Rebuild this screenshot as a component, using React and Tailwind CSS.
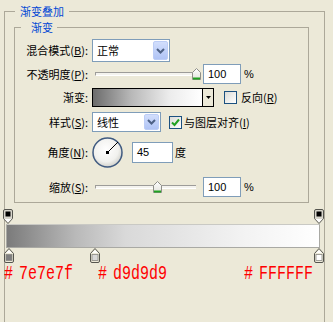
import React from 'react';

const cjk = "font-['Noto_Sans_CJK_SC','Liberation_Sans',sans-serif]";

const DropButton = () => (
  <div className="w-[15px] h-full rounded-[2px] border border-[#bccdf6] bg-gradient-to-b from-[#d2defc] to-[#b0c4f5] flex items-center justify-center">
    <svg width="9" height="6" viewBox="0 0 9 6">
      <path d="M1 1l3.5 3.5L8 1" fill="none" stroke="#4d6185" strokeWidth="2" />
    </svg>
  </div>
);

const Checkbox = ({ checked }) => (
  <div className="w-[13px] h-[13px] border border-[#1c5180] bg-gradient-to-br from-[#dcdcd7] to-white flex items-center justify-center">
    {checked && (
      <svg width="9" height="9" viewBox="0 0 9 9">
        <path d="M1 4.5l2.5 2.5L8 1.5" fill="none" stroke="#21a121" strokeWidth="2" />
      </svg>
    )}
  </div>
);

const Thumb = ({ left }) => (
  <svg className="absolute top-1/2 -translate-y-1/2" style={{ left }} width="9" height="12" viewBox="0 0 9 12">
    <defs>
      <linearGradient id="tg" x1="0" y1="0" x2="0" y2="1">
        <stop offset="0" stopColor="#ffffff" />
        <stop offset="1" stopColor="#e3e3dc" />
      </linearGradient>
    </defs>
    <path d="M0.5 4.5L4.5 0.5L8.5 4.5V11.5H0.5Z" fill="url(#tg)" stroke="#8f8f88" />
    <rect x="1" y="9.5" width="7" height="2" fill="#21a121" />
  </svg>
);

// thumb offset in px from slider start
const Slider = ({ thumb }) => (
  <div className="relative w-[108px] h-full flex items-center">
    <div className="ml-[3px] mr-[4px] flex-1 h-[4px] border-t border-l border-[#9d9c99] border-b border-b-white bg-[#f4f3ee]" />
    <Thumb left={thumb} />
  </div>
);

const NumBox = ({ value, className }) => (
  <div className={`bg-white border border-[#7f9db9] flex items-center pl-[4px] text-[11px] font-['Liberation_Sans',sans-serif] ${className}`}>
    {value}
  </div>
);

const Label = ({ children }) => (
  <div className="w-[73px] text-right whitespace-nowrap">{children}</div>
);

const OpacityStop = () => (
  <svg width="10" height="15" viewBox="0 0 10 15">
    <path d="M2 0.5H8Q9.5 0.5 9.5 2V9.5L5 14.5L0.5 9.5V2Q0.5 0.5 2 0.5Z" fill="#d8d6cc" stroke="#55554f" />
    <rect x="2.5" y="2.5" width="5" height="5" fill="#000" />
    <path d="M1.5 10H8.5L5 13.5Z" fill="#fff" />
  </svg>
);

const ColorStop = ({ color, style }) => (
  <svg className="absolute top-0" style={style} width="10" height="15" viewBox="0 0 10 15">
    <path d="M5 0.5L9.5 5.5V13Q9.5 14.5 8 14.5H2Q0.5 14.5 0.5 13V5.5Z" fill="#ece9d8" stroke="#55554f" />
    <path d="M5 2L8 5H2Z" fill="#fff" />
    <rect x="2" y="6.5" width="6" height="6" fill={color} stroke="#8a8a84" strokeWidth="0.8" />
  </svg>
);

const HexLabel = ({ text, className }) => (
  <div className={`flex text-[15px] leading-[14px] text-[#ff0000] font-['Liberation_Mono',monospace] scale-y-[1.3] origin-top ${className}`}>
    <span className="w-[15px]">#</span>
    <span>{text}</span>
  </div>
);

export default function App() {
  return (
    <div className={`w-[333px] h-[322px] bg-[#ece9d8] overflow-hidden text-[11px] text-black ${cjk}`}>
      <fieldset className="ml-[4px] mt-[4px] w-[315px] h-[340px] border border-[#aca899]">
        <legend className="ml-[10px] px-[5px] leading-[14px] text-[#0046d5]">渐变叠加</legend>

        <fieldset className="ml-[9px] mt-[2px] w-[295px] h-[183px] border border-[#aca899]">
          <legend className="ml-[6px] pl-[10px] pr-[4px] leading-[14px] text-[#0046d5]">渐变</legend>

          {/* blend mode */}
          <div className="mt-[5px] h-[23px] flex items-center">
            <Label>混合模式(<span className="underline">B</span>):</Label>
            <div className="ml-[4px] w-[78px] h-full bg-white border border-[#7f9db9] flex items-center p-[1px]">
              <span className="flex-1 pl-[3px]">正常</span>
              <DropButton />
            </div>
          </div>

          {/* opacity */}
          <div className="mt-[2px] h-[20px] flex items-center">
            <Label>不透明度(<span className="underline">P</span>):</Label>
            <div className="ml-[4px] h-full flex items-center">
              <Slider thumb={100} />
              <NumBox value="100" className="ml-[3px] w-[38px] h-[20px]" />
              <span className="ml-[3px] font-['Liberation_Sans',sans-serif]">%</span>
            </div>
          </div>

          {/* gradient */}
          <div className="mt-[4px] h-[19px] flex items-center">
            <Label>渐变:</Label>
            <div className="ml-[4px] w-[122px] h-full border border-black flex">
              <div className="flex-1 bg-[linear-gradient(to_right,#6c6c6c_0%,#b8b8b8_35%,#ececec_70%,#ffffff_100%)]" />
              <div className="w-[11px] border-l border-black bg-[#ece9d8] flex items-center justify-center">
                <svg width="5" height="3" viewBox="0 0 5 3">
                  <path d="M0 0H5L2.5 3Z" fill="#000" />
                </svg>
              </div>
            </div>
            <div className="ml-[10px]">
              <Checkbox />
            </div>
            <span className="ml-[4px]">反向(<span className="underline">R</span>)</span>
          </div>

          {/* style */}
          <div className="mt-[5px] h-[20px] flex items-center">
            <Label>样式(<span className="underline">S</span>):</Label>
            <div className="ml-[4px] w-[69px] h-full bg-white border border-[#7f9db9] flex items-center p-[1px]">
              <span className="flex-1 pl-[3px]">线性</span>
              <DropButton />
            </div>
            <div className="ml-[8px]">
              <Checkbox checked />
            </div>
            <span className="ml-[2px]">与图层对齐(<span className="underline">I</span>)</span>
          </div>

          {/* angle */}
          <div className="mt-[5px] h-[31px] flex items-center">
            <Label>角度(<span className="underline">N</span>):</Label>
            <div className="ml-[4px] w-[31px] h-[31px]">
              <svg width="31" height="31" viewBox="0 0 31 31">
                <defs>
                  <radialGradient id="dial" cx="0.45" cy="0.4" r="0.6">
                    <stop offset="0" stopColor="#ffffff" />
                    <stop offset="0.7" stopColor="#f1f1ee" />
                    <stop offset="1" stopColor="#d2d2cc" />
                  </radialGradient>
                </defs>
                <circle cx="15.5" cy="15.5" r="14.5" fill="url(#dial)" stroke="#3f5a80" strokeWidth="1.5" />
                <line x1="15.5" y1="15.5" x2="26" y2="5" stroke="#000" strokeWidth="1" />
                <rect x="14" y="14" width="3" height="3" fill="#000" />
              </svg>
            </div>
            <NumBox value="45" className="ml-[9px] w-[41px] h-[21px]" />
            <span className="ml-[2px]">度</span>
          </div>

          {/* scale */}
          <div className="mt-[9px] h-[20px] flex items-center">
            <Label>缩放(<span className="underline">S</span>):</Label>
            <div className="ml-[4px] h-full flex items-center">
              <Slider thumb={61} />
              <NumBox value="100" className="ml-[3px] w-[38px] h-[20px]" />
              <span className="ml-[3px] font-['Liberation_Sans',sans-serif]">%</span>
            </div>
          </div>
        </fieldset>

        {/* gradient editor */}
        <div className="relative -ml-[2px] mt-[6px] w-[321px]">
          <div className="h-[15px] flex justify-between">
            <OpacityStop />
            <OpacityStop />
          </div>
          <div className="ml-[3px] w-[314px] h-[24px] border border-[#a9a9a4] border-t-[#c9c9c4] bg-[linear-gradient(to_right,#7b7b7b_0%,#b9b9b9_22%,#d9d9d9_38%,#f2f2f2_75%,#ffffff_100%)]" />
          <div className="relative h-[15px]">
            <ColorStop color="#7e7e7f" style={{ left: 1 }} />
            <ColorStop color="#d9d9d9" style={{ left: 87 }} />
            <ColorStop color="#ffffff" style={{ left: 311 }} />
          </div>
          <div className="mt-[3px] flex">
            <HexLabel text="7e7e7f" className="ml-[1px] w-[94px]" />
            <HexLabel text="d9d9d9" className="w-[146px]" />
            <HexLabel text="FFFFFF" />
          </div>
        </div>
      </fieldset>
    </div>
  );
}
